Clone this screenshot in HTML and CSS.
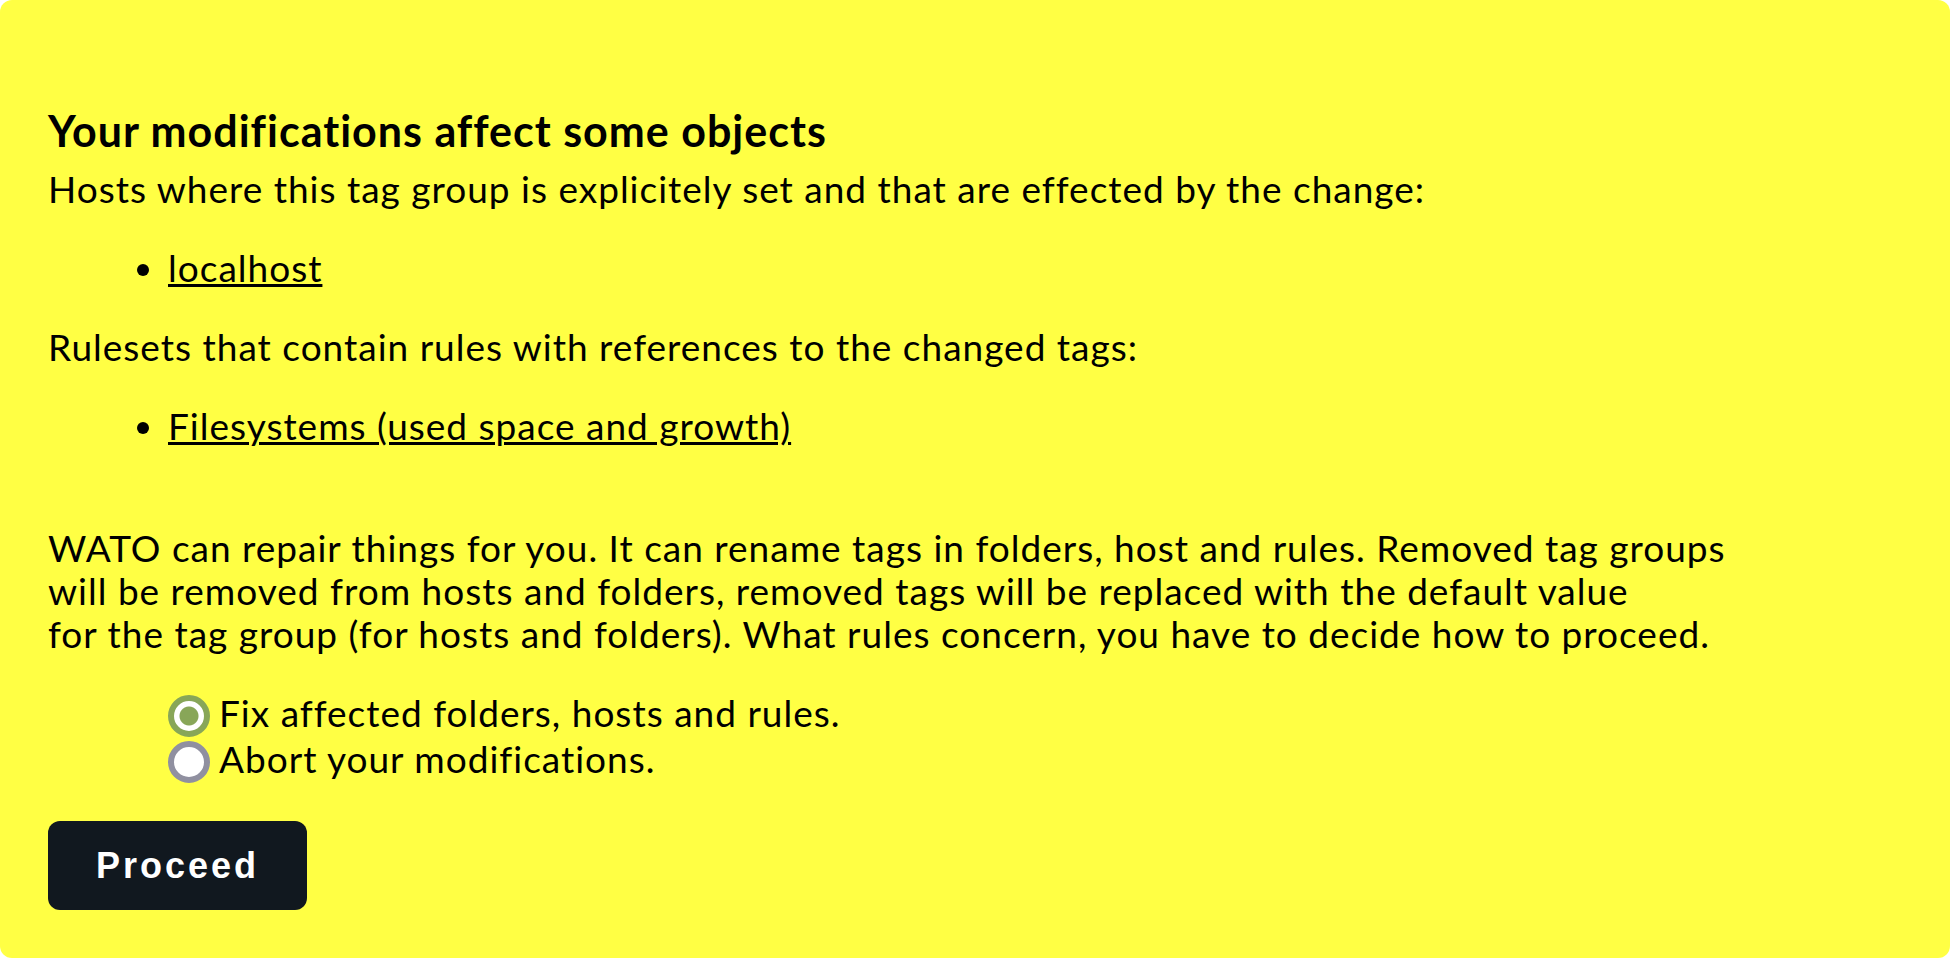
FILE: index.html
```html
<!DOCTYPE html>
<html lang="en">
<head>
<meta charset="utf-8">
<meta name="viewport" content="width=device-width, initial-scale=1">
<title>Confirm modifications</title>
<link rel="stylesheet" href="styles.css">
</head>
<body>
<main class="warning">
<form class="form">
<h1 class="title">Your modifications affect some objects</h1>
<p class="text">Hosts where this tag group is explicitely set and that are effected by the change:</p>
<ul class="objects">
<li><a href="#localhost">localhost</a></li>
</ul>
<p class="text">Rulesets that contain rules with references to the changed tags:</p>
<ul class="objects">
<li><a href="#filesystems">Filesystems (used space and growth)</a></li>
</ul>
<p class="text repair">WATO can repair things for you. It can rename tags in folders, host and rules. Removed tag groups<br>will be removed from hosts and folders, removed tags will be replaced with the default value<br>for the tag group (for hosts and folders). What rules concern, you have to decide how to proceed.</p>
<div class="choices">
<div class="choice"><input type="radio" name="mode" id="fix" checked><label for="fix">Fix affected folders, hosts and rules.</label></div>
<div class="choice"><input type="radio" name="mode" id="abort"><label for="abort">Abort your modifications.</label></div>
</div>
<button class="proceed" type="button">Proceed</button>
</form>
</main>
</body>
</html>
```
FILE: styles.css
```css
* { box-sizing: border-box; }
body {
  margin: 0;
  background: #fff;
  color: #000;
  font-family: Lato, sans-serif;
  font-size: 37px;
  line-height: 43px;
  letter-spacing: 1px;
}
.warning {
  min-height: 100vh;
  padding: 107px 48px 48px;
  background: #ffff44;
  border-radius: 12px;
}
.title { margin: 0; font-size: 43px; line-height: 48px; font-weight: 700; }
.text { margin: 12px 0 0; }
.objects { margin: 36px 0; padding-left: 120px; }
.objects a { color: inherit; text-decoration: underline; text-decoration-thickness: 3px; }
.repair { margin-top: 79px; }
.choices { margin: 36px 0 38px; padding-left: 120px; }
.choice { display: flex; align-items: flex-start; gap: 9px; min-height: 46px; }
.choice input {
  appearance: none;
  align-self: flex-end;
  flex: none;
  width: 42px;
  height: 42px;
  margin: 0;
  border: 6px solid #9090a0;
  border-radius: 50%;
  background: #fff;
}
.choice input:checked {
  border-color: #88a658;
  background: radial-gradient(circle, #88a658 9px, #fff 10px);
}
.proceed {
  padding: 0 48px;
  height: 89px;
  border: 0;
  border-radius: 12px;
  background: #11181f;
  color: #fff;
  font: 700 36px "Liberation Sans", sans-serif;
  letter-spacing: 3px;
}
```
